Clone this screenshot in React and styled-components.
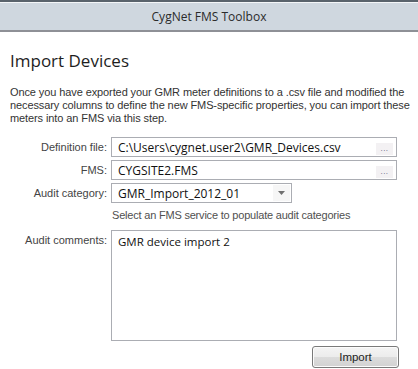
import React from 'react';
import styled, { createGlobalStyle } from 'styled-components';

const Global = createGlobalStyle`
  html, body { margin: 0; padding: 0; background: #fff; }
  body { width: 418px; height: 369px; overflow: hidden; }
`;

const Window = styled.div`
  width: 418px;
  height: 369px;
  background: #fff;
  display: flex;
  flex-direction: column;
`;

const TitleBar = styled.div`
  height: 28px;
  border-top: 2px solid #5a636c;
  border-bottom: 2px solid #8e9096;
  box-shadow: inset 0 1px 0 #f4f6f8;
  background: #cfd7df;
  display: flex;
  align-items: center;
  justify-content: center;
  font-family: "Open Sans", "Noto Sans", sans-serif;
  font-size: 12px;
  color: #2b2b2b;
`;

const Body = styled.div`
  padding: 17px 21px 0 10px;
  display: flex;
  flex-direction: column;
`;

const Heading = styled.h1`
  margin: 0;
  font-family: "Open Sans", "Noto Sans", sans-serif;
  font-weight: 400;
  font-size: 17px;
  color: #1e1e1e;
  line-height: 24px;
`;

const Intro = styled.p`
  margin: 13px -14px 0 0;
  font-family: "Liberation Sans", Arial, sans-serif;
  font-size: 11px;
  line-height: 13px;
  letter-spacing: -0.1px;
  color: #333;
`;

const Form = styled.div`
  margin-top: 12px;
  display: grid;
  grid-template-columns: 97px 1fr;
  column-gap: 4px;
  row-gap: 3px;
  align-items: center;
`;

const Label = styled.label`
  font-family: "Liberation Sans", Arial, sans-serif;
  font-size: 11px;
  color: #444;
  text-align: right;
  align-self: ${p => (p.$top ? 'start' : 'center')};
  padding-top: ${p => (p.$top ? '4px' : '0')};
`;

const Field = styled.div`
  height: 20px;
  box-sizing: border-box;
  border: 1px solid #abadb3;
  background: #fff;
  display: flex;
  align-items: center;
  padding-left: 6px;
  width: ${p => p.$width || 'auto'};
  font-family: "Open Sans", "Noto Sans", sans-serif;
  font-size: 12px;
  color: #111;
`;

const Value = styled.span`
  flex: 1;
  white-space: nowrap;
  overflow: hidden;
`;

const Browse = styled.span`
  width: 17px;
  height: 12px;
  margin-right: 3px;
  margin-top: 3px;
  background: #f3f1f3;
  display: flex;
  align-items: center;
  justify-content: center;
  font-family: "Liberation Sans", Arial, sans-serif;
  font-size: 8px;
  letter-spacing: 0.5px;
  color: #5a5a7a;
`;

const DropButton = styled.span`
  width: 17px;
  height: 16px;
  margin-right: 1px;
  background: #f6f6f6;
  display: flex;
  align-items: center;
  justify-content: center;
`;

const Hint = styled.div`
  grid-column: 2;
  margin-top: 3px;
  margin-bottom: 6px;
  padding-left: 1px;
  font-family: "Liberation Sans", Arial, sans-serif;
  font-size: 11px;
  letter-spacing: -0.2px;
  color: #505050;
`;

const Comments = styled.div`
  height: 111px;
  box-sizing: border-box;
  border: 1px solid #abadb3;
  padding: 3px 6px;
  font-family: "Open Sans", "Noto Sans", sans-serif;
  font-size: 11.5px;
  color: #111;
`;

const Footer = styled.div`
  display: flex;
  justify-content: flex-end;
  margin: 5px -2px 0 0;
`;

const Button = styled.button`
  width: 87px;
  height: 22px;
  border: 1px solid #7a7a7a;
  border-radius: 3px;
  background: linear-gradient(#f4f4f4 0%, #ececec 50%, #dcdcdc 51%, #d2d2d2 100%);
  box-shadow: inset 0 0 0 1px #fcfcfc;
  font-family: "Liberation Sans", Arial, sans-serif;
  font-size: 11.5px;
  color: #222;
  padding: 0;
`;

export default function App() {
  return (
    <Window>
      <Global />
      <TitleBar>CygNet FMS Toolbox</TitleBar>
      <Body>
        <Heading>Import Devices</Heading>
        <Intro>
          Once you have exported your GMR meter definitions to a .csv file and modified the
          necessary columns to define the new FMS-specific properties, you can import these
          meters into an FMS via this step.
        </Intro>
        <Form>
          <Label>Definition file:</Label>
          <Field>
            <Value>C:\Users\cygnet.user2\GMR_Devices.csv</Value>
            <Browse>...</Browse>
          </Field>
          <Label>FMS:</Label>
          <Field>
            <Value>CYGSITE2.FMS</Value>
            <Browse>...</Browse>
          </Field>
          <Label>Audit category:</Label>
          <Field $width="181px">
            <Value>GMR_Import_2012_01</Value>
            <DropButton>
              <svg width="7" height="4" viewBox="0 0 7 4">
                <path d="M0 0 H7 L3.5 4 Z" fill="#707070" />
              </svg>
            </DropButton>
          </Field>
          <Hint>Select an FMS service to populate audit categories</Hint>
          <Label $top>Audit comments:</Label>
          <Comments>GMR device import 2</Comments>
        </Form>
        <Footer>
          <Button>Import</Button>
        </Footer>
      </Body>
    </Window>
  );
}
